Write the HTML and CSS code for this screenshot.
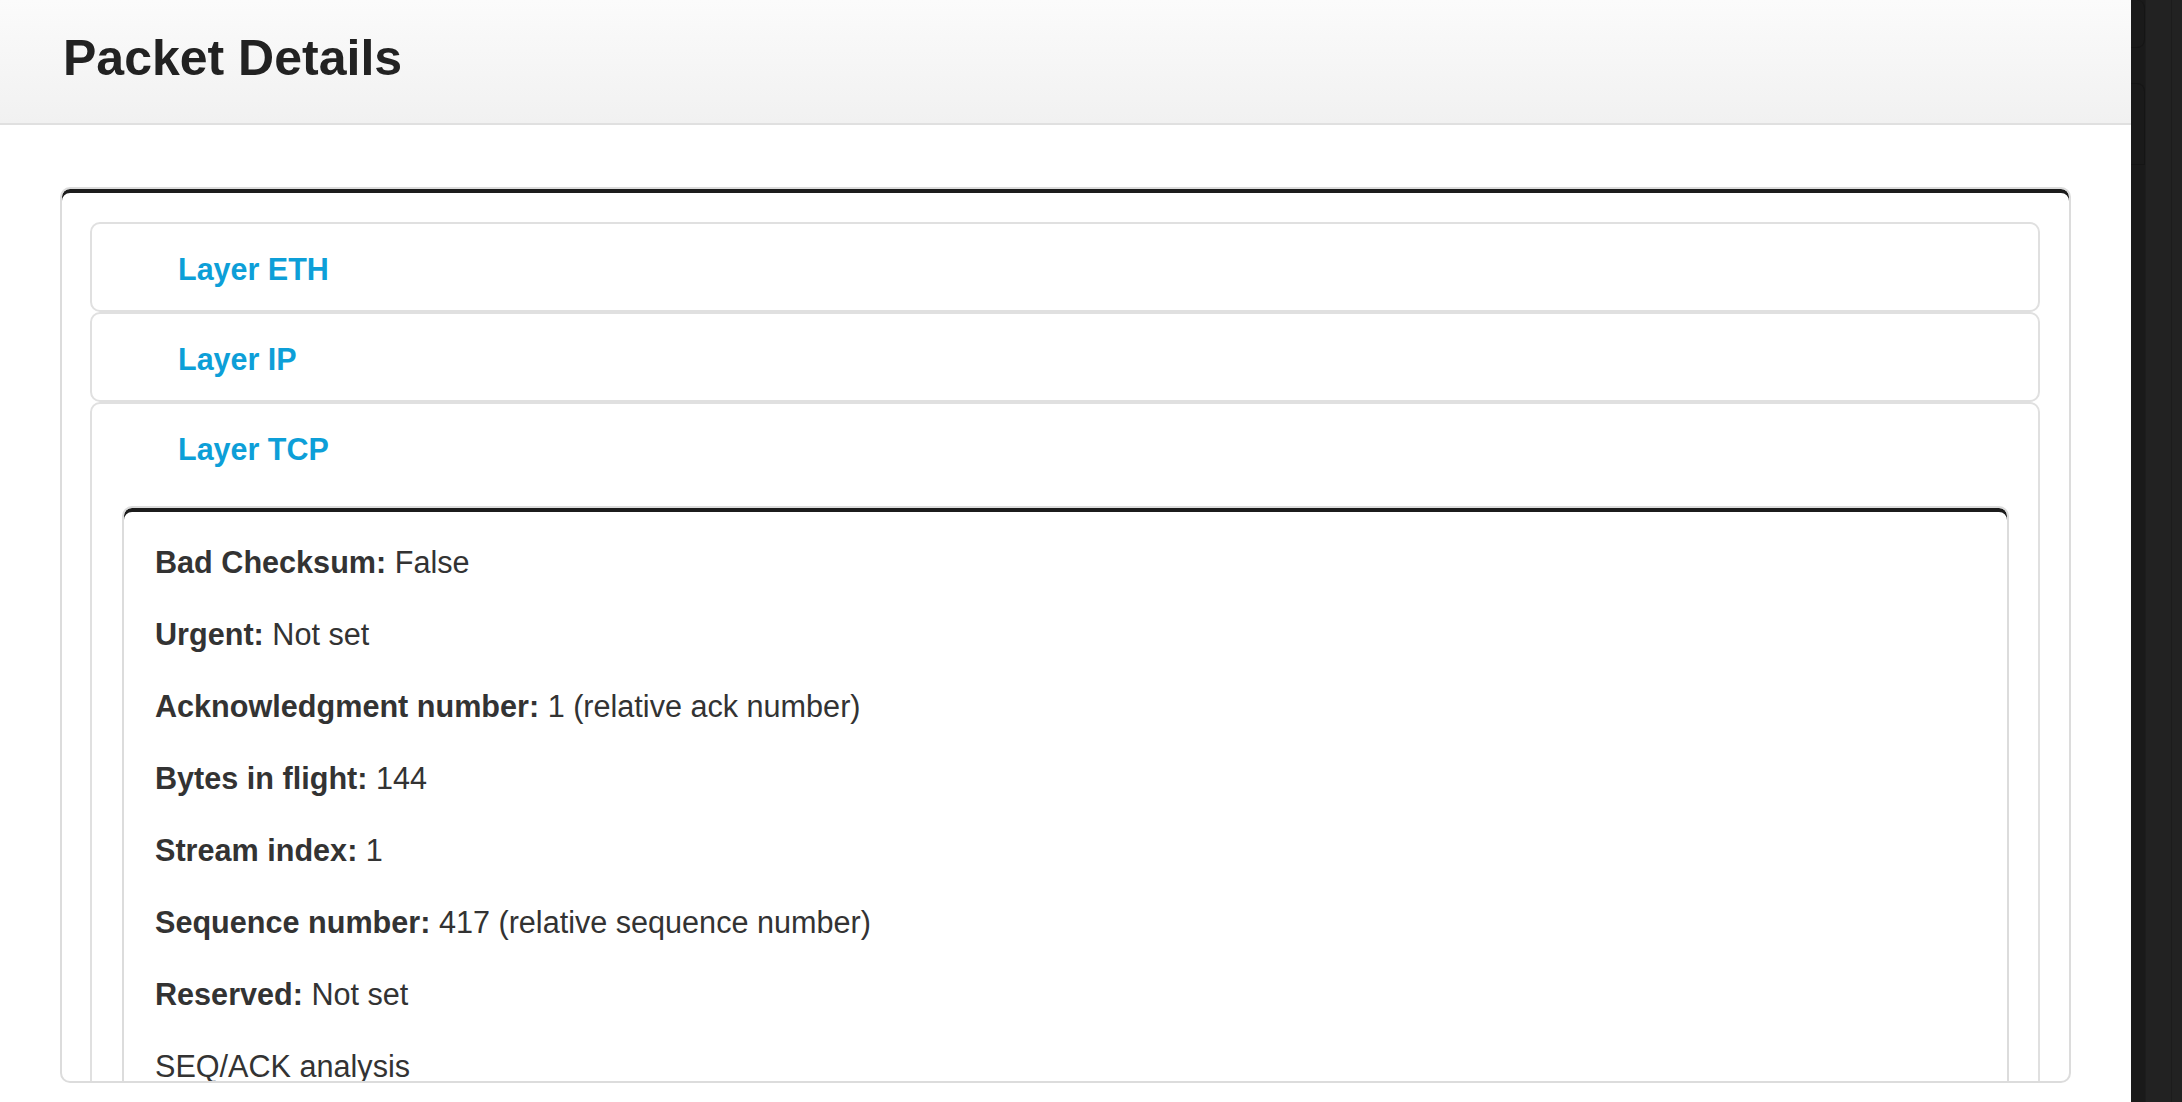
FILE: index.html
```html
<!DOCTYPE html>
<html lang="en">
<head>
<meta charset="utf-8">
<title>Packet Details</title>
<link rel="stylesheet" href="styles.css">
</head>
<body>
<div class="app">
  <div class="page">
    <header class="header">
      <h1 class="title">Packet Details</h1>
    </header>
    <main class="main">
      <section class="card">
        <div class="panel">
          <div class="panel-heading">Layer ETH</div>
        </div>
        <div class="panel">
          <div class="panel-heading">Layer IP</div>
        </div>
        <div class="panel panel-open">
          <div class="panel-heading">Layer TCP</div>
          <div class="panel-body">
            <div class="fields">
              <p class="field"><strong>Bad Checksum:</strong> False</p>
              <p class="field"><strong>Urgent:</strong> Not set</p>
              <p class="field"><strong>Acknowledgment number:</strong> 1 (relative ack number)</p>
              <p class="field"><strong>Bytes in flight:</strong> 144</p>
              <p class="field"><strong>Stream index:</strong> 1</p>
              <p class="field"><strong>Sequence number:</strong> 417 (relative sequence number)</p>
              <p class="field"><strong>Reserved:</strong> Not set</p>
              <p class="field">SEQ/ACK analysis</p>
            </div>
          </div>
        </div>
      </section>
    </main>
  </div>
  <aside class="sidebar">
    <div class="side-tab side-tab-a"></div>
    <div class="side-tab side-tab-b"></div>
  </aside>
</div>
</body>
</html>
```

FILE: styles.css
```css
html, body {
  margin: 0;
  padding: 0;
  background: #ffffff;
}

body {
  font-family: "Liberation Sans", Arial, Helvetica, sans-serif;
  color: #333333;
}

.app {
  display: flex;
  width: 2182px;
  height: 1102px;
  overflow: hidden;
}

.page {
  flex: 1;
  min-width: 0;
  display: flex;
  flex-direction: column;
  background: #ffffff;
}

.header {
  height: 123px;
  border-bottom: 2px solid #e0e0e0;
  background: linear-gradient(to bottom, #fbfbfb 0%, #f1f1f1 100%);
  padding-left: 63px;
  flex: none;
}

.title {
  margin: 0;
  font-size: 50px;
  line-height: 116px;
  font-weight: bold;
  color: #222222;
}

.main {
  flex: 1;
  padding: 62px 60px 0 60px;
  min-height: 0;
}

.card {
  height: 896px;
  box-sizing: border-box;
  border: 2px solid #dcdcdc;
  border-radius: 10px;
  box-shadow: inset 0 4px 0 #1c1c1c;
  padding: 33px 29px 0 28px;
  overflow: hidden;
  background: #ffffff;
}

.panel {
  border: 2px solid #e0e0e0;
  border-radius: 10px;
  background: #ffffff;
}

.panel-heading {
  box-sizing: border-box;
  height: 86px;
  padding: 5px 0 0 86px;
  line-height: 81px;
  font-size: 30.5px;
  font-weight: bold;
  color: #0d9fd8;
}

.panel-body {
  padding: 16px 29px 0 30px;
}

.fields {
  border: 2px solid #dcdcdc;
  border-radius: 10px;
  box-shadow: inset 0 4px 0 #1c1c1c;
  padding: 33px 28px 0 31px;
  min-height: 700px;
}

.field {
  margin: 0 0 30px 0;
  font-size: 30.6px;
  line-height: 42px;
  color: #333333;
}

.field strong {
  font-weight: bold;
}

.sidebar {
  width: 51px;
  flex: none;
  background: linear-gradient(to right,
    #1a1a1a 0px, #1a1a1a 14px,
    #1d1d1d 14px, #1d1d1d 15px,
    #222222 15px, #222222 40px,
    #1c1c1c 40px, #1c1c1c 41px,
    #222222 41px, #222222 51px);
  display: flex;
  flex-direction: column;
}

.side-tab {
  width: 14px;
  box-sizing: border-box;
  border-right: 1px solid #151515;
  border-radius: 0 8px 8px 0;
}

.side-tab-a {
  height: 48px;
  border-bottom: 1px solid #151515;
}

.side-tab-b {
  margin-top: 35px;
  height: 82px;
  border-top: 1px solid #151515;
  border-bottom: 1px solid #151515;
  border-radius: 0 8px 0 0;
}
```
